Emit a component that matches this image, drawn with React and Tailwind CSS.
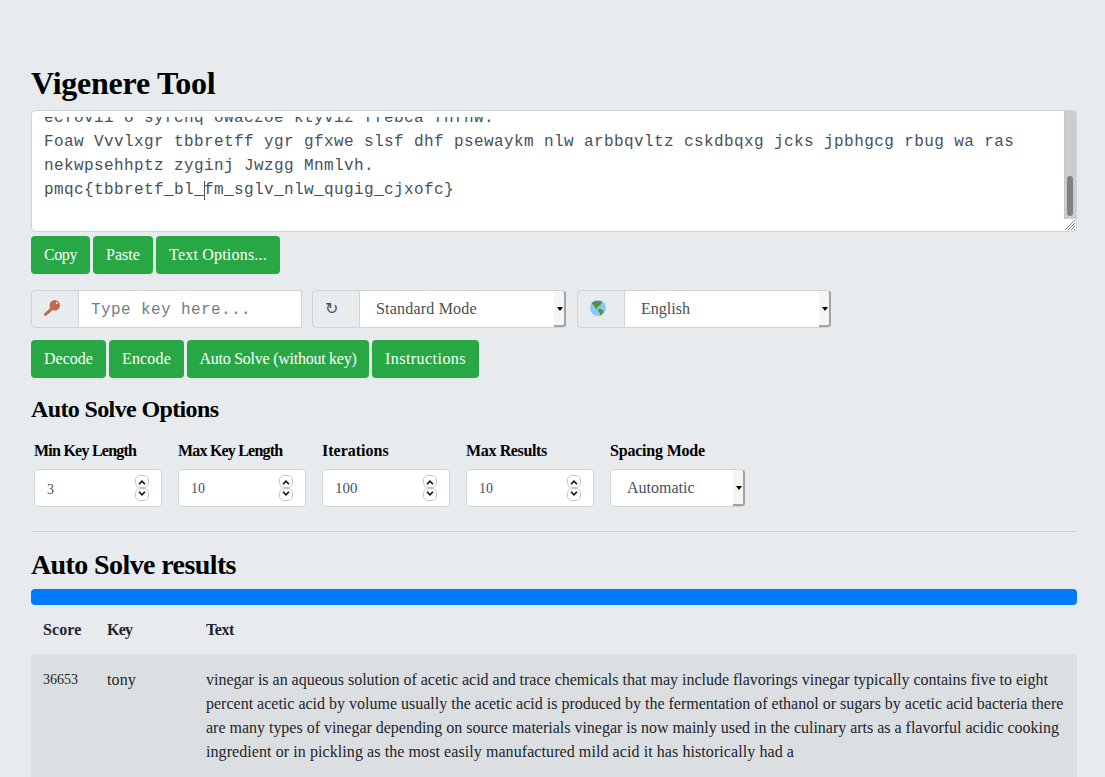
import React from "react";

const CIPHER_LINES = [
  "ecfovii o syfchq owaczoe ktyviz ffebca fnfhw.",
  "Foaw Vvvlxgr tbbretff ygr gfxwe slsf dhf psewaykm nlw arbbqvltz cskdbqxg jcks jpbhgcg rbug wa ras",
  "nekwpsehhptz zyginj Jwzgg Mnmlvh.",
];

function Button({ className, children }) {
  return (
    <button
      type="button"
      className={`flex h-[38px] items-center justify-center whitespace-nowrap rounded bg-[#28a745] text-base text-white ${className}`}
    >
      {children}
    </button>
  );
}

function ResizeGrip() {
  return (
    <svg viewBox="0 0 12 12" className="h-3 w-3" shapeRendering="crispEdges">
      <path d="M1 11 11 1M4 11l7-7M7 11l4-4M10 11l1-1" stroke="#777b7d" strokeWidth="1" fill="none" />
    </svg>
  );
}

function KeyIcon() {
  return (
    <svg viewBox="0 0 16 16" className="-mt-0.5 h-4 w-4">
      <path d="M1.4 14.4 8.6 7.4" fill="none" stroke="#c1694f" strokeWidth="2.8" strokeLinecap="round" />
      <path d="M3.6 13.4 8.4 8.8" fill="none" stroke="#c1694f" strokeWidth="1.6" />
      <circle cx="10.8" cy="5.2" r="5.2" fill="#c1694f" />
      <circle cx="12.9" cy="3.1" r="1.1" fill="#e8ebee" />
    </svg>
  );
}

function GlobeIcon() {
  return (
    <svg viewBox="0 0 16 16" className="-mt-0.5 h-4 w-4">
      <circle cx="8" cy="8" r="8" fill="#88c9f9" />
      <path
        d="M2.2 2.6C4 1 6.4.8 8.6 1l2 .3 1.9.8-.7 1.5-1.2.4.2 1.2L9 5.8l-.9 1.3-1.3.3.3 1.2 1.4.5-.5.4-2.4-.9L4.4 6.6 3.6 4.8 1.7 4z"
        fill="#5c913b"
      />
      <path d="M8.2 9.3l2.2-.6 1.6.7 1.5 1.1-.2 1.9-1.3 1.2-1 1.4-1 .5-.3-2.5-1.4-1.5z" fill="#5c913b" />
    </svg>
  );
}

function SelectArrow() {
  return (
    <span className="-mr-px flex h-[36px] w-[12px] shrink-0 items-center justify-center rounded-r-[3px] border-b-2 border-r-2 border-[#a5a29f] bg-[#f6f5f4]">
      <svg viewBox="0 0 6 4" className="ml-0.5 mt-0.5 h-1 w-1.5 shrink-0">
        <path d="M0 0h6L3 4z" fill="#000" />
      </svg>
    </span>
  );
}

function Addon({ children }) {
  return (
    <span className="flex w-12 shrink-0 items-center rounded-l border border-[#ced4da] bg-[#e9ecef] pl-3 text-[#495057]">
      {children}
    </span>
  );
}

function SelectGroup({ icon, label, className }) {
  return (
    <div className="flex h-[38px] w-[254px]">
      <Addon>{icon}</Addon>
      <div className="-ml-px flex flex-1 items-center justify-between rounded-r border border-[#ced4da] bg-white pl-4 text-[#495057]">
        <span className={className}>{label}</span>
        <SelectArrow />
      </div>
    </div>
  );
}

function Spinner() {
  return (
    <span className="flex flex-col">
      <span className="flex h-[13px] w-[14px] items-center justify-center rounded-[5px] border border-[#cdc7c2]">
        <svg viewBox="0 0 8 5" className="mt-0.5 h-[5px] w-2">
          <path d="M1 4.2 4 1.2l3 3" fill="none" stroke="#111" strokeWidth="1.6" />
        </svg>
      </span>
      <span className="flex h-[13px] w-[14px] items-center justify-center rounded-[5px] border border-[#cdc7c2]">
        <svg viewBox="0 0 8 5" className="-mt-0.5 h-[5px] w-2">
          <path d="M1 .8 4 3.8 7 .8" fill="none" stroke="#111" strokeWidth="1.6" />
        </svg>
      </span>
    </span>
  );
}

function NumberField({ label, labelClass, value, valueClass }) {
  return (
    <div className="flex w-32 flex-col gap-1.5">
      <label className={`whitespace-nowrap text-base font-bold ${labelClass}`}>{label}</label>
      <div className="flex h-[38px] items-center justify-between rounded border border-[#ced4da] bg-white pl-3 pr-3 text-[#495057]">
        <span className={valueClass}>{value}</span>
        <Spinner />
      </div>
    </div>
  );
}

export default function App() {
  return (
    <div className="h-[777px] w-[1105px] overflow-hidden bg-[#e8ebee] pl-[31px] pr-7 pt-[64px] font-['Liberation_Serif',serif] text-base text-black">
      <h1 className="h-[46px] whitespace-nowrap text-[32px] font-bold leading-[38px] tracking-[-0.24px]">Vigenere Tool</h1>

      <div className="flex h-[122px] overflow-hidden rounded border border-[#ced4da] bg-white">
        <div className="flex-1 pl-3 pt-1.5">
          <div className="h-[108px] overflow-hidden whitespace-nowrap font-['Liberation_Mono',monospace] leading-6 tracking-[0.4px] text-[#495057]">
            <div className="-mt-[11px]">
              {CIPHER_LINES.map((line) => (
                <p key={line}>{line}</p>
              ))}
              <p className="flex items-center">
                <span>{"pmqc{tbbretf_bl_"}</span>
                <span className="-mr-px h-[19px] w-px bg-[#495057]" />
                <span>{"fm_sglv_nlw_qugig_cjxofc}"}</span>
              </p>
            </div>
          </div>
        </div>
        <div className="flex w-3 flex-col">
          <div className="flex flex-1 items-end border-l border-[#c9c4bf] bg-[#cdcdcd] pb-[3px] pl-0.5">
            <div className="h-10 w-1.5 rounded-full bg-[#7e8281]" />
          </div>
          <ResizeGrip />
        </div>
      </div>

      <div className="mt-1 flex gap-[3px]">
        <Button className="w-[59px] tracking-[-0.4px]">Copy</Button>
        <Button className="w-[60px]">Paste</Button>
        <Button className="w-[124px] tracking-[0.2px]">Text Options...</Button>
      </div>

      <div className="mt-4 flex">
        <div className="mr-2.5 flex h-[38px] w-[271px]">
          <Addon>
            <KeyIcon />
          </Addon>
          <div className="-ml-px flex flex-1 items-center border border-[#ced4da] bg-white pl-3 pt-0.5 font-['Liberation_Mono',monospace] tracking-[0.4px] text-[#757d84]">
            Type key here...
          </div>
        </div>
        <SelectGroup
          icon={<span className="font-['DejaVu_Sans',sans-serif] text-base">↻</span>}
          label="Standard Mode"
          className="tracking-[0.2px]"
        />
        <div className="ml-[11px]">
          <SelectGroup icon={<GlobeIcon />} label="English" className="tracking-normal" />
        </div>
      </div>

      <div className="mt-3 flex gap-[3px]">
        <Button className="w-[75px]">Decode</Button>
        <Button className="w-[75px] tracking-[0.15px]">Encode</Button>
        <Button className="w-[182px] tracking-[-0.25px]">Auto Solve (without key)</Button>
        <Button className="w-[107px] tracking-[0.45px]">Instructions</Button>
      </div>

      <h4 className="mt-[17px] h-11 whitespace-nowrap text-2xl font-bold leading-[29px] tracking-[-0.63px]">Auto Solve Options</h4>

      <div className="flex gap-4 pl-[3px]">
        <NumberField label="Min Key Length" labelClass="tracking-[-0.76px]" value="3" valueClass="text-[14px] pt-0.5" />
        <NumberField label="Max Key Length" labelClass="tracking-[-0.8px]" value="10" valueClass="text-[14px]" />
        <NumberField label="Iterations" labelClass="tracking-normal" value="100" valueClass="text-[15px]" />
        <NumberField label="Max Results" labelClass="tracking-[-0.36px]" value="10" valueClass="text-[14px]" />
        <div className="flex w-[135px] flex-col gap-1.5">
          <label className="whitespace-nowrap font-bold tracking-[-0.2px]">Spacing Mode</label>
          <div className="flex h-[38px] items-center justify-between rounded border border-[#ced4da] bg-white pl-4 text-[#495057]">
            <span>Automatic</span>
            <SelectArrow />
          </div>
        </div>
      </div>

      <hr className="mt-6 border-[#ced2d6]" />

      <h3 className="mt-4 h-[41px] whitespace-nowrap text-[28px] font-bold leading-[34px] tracking-[-0.6px]">Auto Solve results</h3>
      <div className="h-4 rounded bg-[#007bff]" />

      <div className="grid grid-cols-[64px_99px_1fr] text-[#212529]">
        <div className="h-[49px] p-3 pr-0 pt-[13px] font-bold tracking-[0.1px]">Score</div>
        <div className="h-[49px] p-3 pt-[13px] font-bold tracking-[-0.8px]">Key</div>
        <div className="h-[49px] p-3 pt-[13px] font-bold tracking-[-0.4px]">Text</div>
      </div>
      <div className="grid h-[130px] grid-cols-[64px_99px_1fr] bg-[#dcdfe2] pt-0.5 text-[#212529]">
        <div className="p-3 pr-0 text-[14px] leading-6">36653</div>
        <div className="p-3 tracking-[0.1px]">tony</div>
        <div className="whitespace-nowrap py-3 pl-3">
          <p className="tracking-[-0.01px]">
            vinegar is an aqueous solution of acetic acid and trace chemicals that may include flavorings vinegar typically contains five to eight
          </p>
          <p>
            percent acetic acid by volume usually the acetic acid is produced by the fermentation of ethanol or sugars by acetic acid bacteria there
          </p>
          <p className="tracking-[-0.014px]">
            are many types of vinegar depending on source materials vinegar is now mainly used in the culinary arts as a flavorful acidic cooking
          </p>
          <p className="tracking-[0.078px]">
            ingredient or in pickling as the most easily manufactured mild acid it has historically had a
          </p>
        </div>
      </div>
    </div>
  );
}
